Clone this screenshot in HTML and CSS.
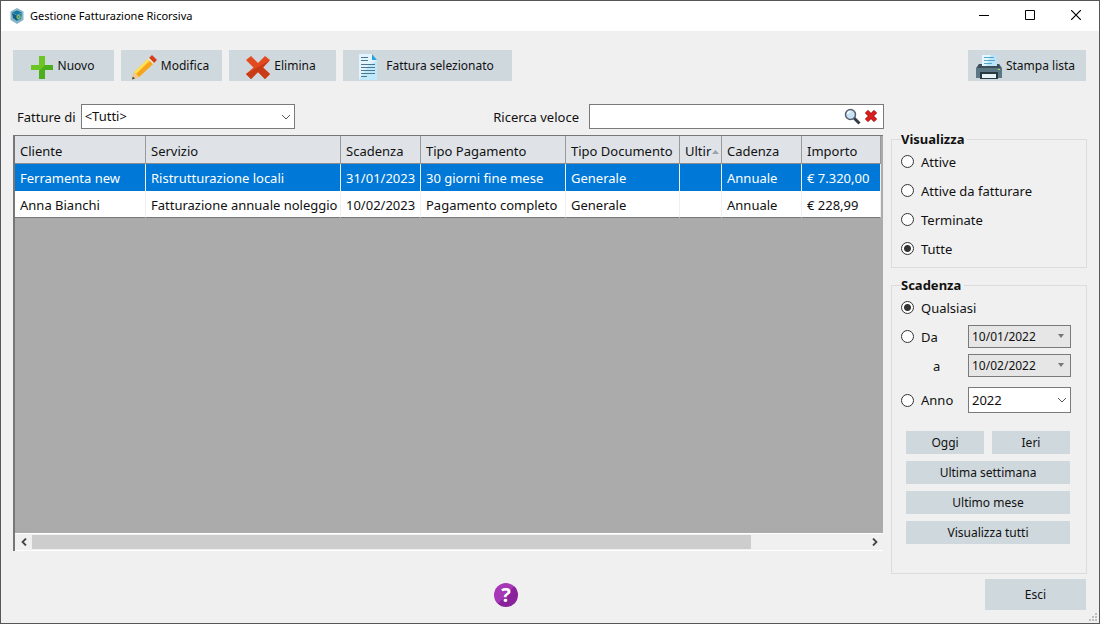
FILE: index.html
```html
<!DOCTYPE html>
<html lang="it">
<head>
<meta charset="utf-8">
<title>Gestione Fatturazione Ricorsiva</title>
<link rel="stylesheet" href="styles.css">
</head>
<body>
<div class="window">
  <header class="titlebar">
    <svg class="app-icon" width="16" height="16" viewBox="0 0 16 16" aria-hidden="true">
      <path d="M8 0 14.500 3.500V12L8 16 1.500 12V3.500Z" fill="#8ab5c9"/>
      <path d="M8 2.500 13 4.500 8 7 3 4.500Z" fill="#16779f"/>
      <path d="M3 5 8 7.500V13L4 10Z" fill="#0e5d83"/>
      <path d="M13 5 8 7.500V13L12 11Z" fill="#238aa6"/>
      <circle cx="9.500" cy="9" r="1.500" fill="none" stroke="#a9bd58" stroke-width="1.200"/>
    </svg>
    <h1 class="title">Gestione Fatturazione Ricorsiva</h1>
    <div class="caption-buttons">
      <button class="caption" aria-label="Riduci a icona"><svg width="10" height="10" viewBox="0 0 10 10"><path d="M0 5.500H10" stroke="#000"/></svg></button>
      <button class="caption" aria-label="Ingrandisci"><svg width="10" height="10" viewBox="0 0 10 10"><path d="M.5.500H9.500V9.500H.5Z" stroke="#000" fill="none"/></svg></button>
      <button class="caption" aria-label="Chiudi"><svg width="10" height="10" viewBox="0 0 10 10"><path d="M0 0 10 10M10 0 0 10" stroke="#000" stroke-width="1.200"/></svg></button>
    </div>
  </header>

  <main class="content">
    <div class="toolbar">
      <button class="btn tool">
        <svg width="24" height="24" viewBox="0 0 24 24" aria-hidden="true"><path d="M9 1H15V10H23V15H15V24H9V15H1V10H9Z" fill="#6cc524"/><path d="M15 10H23V15H15V24H9V16Z" fill="#4cae1d"/></svg>
        Nuovo
      </button>
      <button class="btn tool">
        <svg width="26" height="26" viewBox="0 0 26 26" aria-hidden="true"><path d="M3 18 18 4 23 9 8 23 1 25.500Z" fill="#fcc51e"/><path d="M5 20 20 6 23 9 8 23Z" fill="#f5a41b"/><path d="M3 18 18 4 19.500 5.500 5 20Z" fill="#ffe05b"/><path d="M3 18 8 23 1 25.500Z" fill="#f0c98c"/><path d="M1.800 22.500 4 24.500 1 25.500Z" fill="#444"/><path d="M18 4 21 1 26 6 23 9Z" fill="#d43d1d"/><path d="M17 5 18 4 23 9 22 10Z" fill="#e9eef0"/></svg>
        Modifica
      </button>
      <button class="btn tool">
        <svg width="24" height="24" viewBox="0 0 24 24" aria-hidden="true"><path d="M5 1 12 8 19 1 24 5 17 12.500 24 19 19 24 12 17 5 24 0 19 7.500 12.500 0 5Z" fill="#e34a20"/><path d="M24 5 17 12.500 24 19 19 24 12 17 5 24 0 19Z" fill="#c93a17"/></svg>
        Elimina
      </button>
      <button class="btn tool tool-wide">
        <svg width="20" height="26" viewBox="0 0 20 26" aria-hidden="true"><path d="M1 0H14L19 6V26H1Z" fill="#e2f5ff"/><path d="M10 12 19 6V26H1Z" fill="#bfe8fb"/><path d="M14 0 19 6H14Z" fill="#29a3df"/><path d="M3 3.500H10M3 6.500H10M3 10.500H17M3 13.500H17M3 16.500H17M3 19.500H17M3 22.500H9" stroke="#4b7890"/></svg>
        Fattura selezionato
      </button>
      <button class="btn tool tool-end">
        <svg width="26" height="24" viewBox="0 0 26 24" aria-hidden="true"><path d="M3 9H23L26 13V23H0V13Z" fill="#5b7685"/><path d="M3 9H23L25 13H1Z" fill="#3c4e57"/><path d="M6 0H21V11H6Z" fill="#e4f6ff"/><path d="M15 0H21V11H10Z" fill="#bae5f9"/><path d="M8 2.500H18M8 5.500H19M8 8.500H16" stroke="#57a6ca"/><path d="M4 17H22V24H4Z" fill="#263940"/><path d="M6 19H20V23H6Z" fill="#e8f3f8"/><path d="M22 14.500H24" stroke="#b6df45"/></svg>
        Stampa lista
      </button>
    </div>

    <div class="columns">
      <section class="list">
        <div class="filters">
          <label for="fatture">Fatture di</label>
          <div class="combo combo-tutti">
            <select id="fatture"><option>&lt;Tutti&gt;</option></select>
            <svg width="10" height="6" viewBox="0 0 10 6" aria-hidden="true"><path d="M1 1 5 5 9 1" fill="none" stroke="#555"/></svg>
          </div>
          <label class="search-label" for="ricerca">Ricerca veloce</label>
          <div class="search">
            <input id="ricerca" type="text">
            <button class="icon-btn" aria-label="Cerca"><svg width="17" height="17" viewBox="0 0 17 17"><path d="M10 10 15.500 15.500" stroke="#333b49" stroke-width="3"/><circle cx="6.500" cy="6.500" r="5" fill="#c9e2f7" stroke="#56606e" stroke-width="1.500"/><path d="M3.500 6A3 3 0 0 1 6.500 3.500" stroke="#fff" fill="none" stroke-width="1.500"/></svg></button>
            <button class="icon-btn" aria-label="Cancella"><svg width="14" height="14" viewBox="0 0 14 14"><path d="M2.500 2.500 11.500 11.500M11.500 2.500 2.500 11.500" stroke="#a51212" stroke-width="4.500"/><path d="M2.500 2.500 11.500 11.500M11.500 2.500 2.500 11.500" stroke="#dc2020" stroke-width="2.800"/></svg></button>
          </div>
        </div>

        <div class="grid">
          <table class="table">
            <colgroup><col class="c-cliente"><col class="c-servizio"><col class="c-scad"><col class="c-pag"><col class="c-doc"><col class="c-ult"><col class="c-cad"><col class="c-imp"></colgroup>
            <thead>
              <tr><th>Cliente</th><th>Servizio</th><th>Scadenza</th><th>Tipo Pagamento</th><th>Tipo Documento</th><th class="sorted">Ultir<svg width="7" height="4" viewBox="0 0 7 4" aria-hidden="true"><path d="M0 4 3.500 0 7 4Z" fill="#9aa3ab"/></svg></th><th>Cadenza</th><th>Importo</th></tr>
            </thead>
            <tbody>
              <tr class="selected"><td>Ferramenta new</td><td>Ristrutturazione locali</td><td>31/01/2023</td><td>30 giorni fine mese</td><td>Generale</td><td></td><td>Annuale</td><td>€ 7.320,00</td></tr>
              <tr><td>Anna Bianchi</td><td>Fatturazione annuale noleggio</td><td>10/02/2023</td><td>Pagamento completo</td><td>Generale</td><td></td><td>Annuale</td><td>€ 228,99</td></tr>
            </tbody>
          </table>
          <div class="scrollbar">
            <button class="arrow" aria-label="Scorri a sinistra"><svg width="6" height="8" viewBox="0 0 6 8"><path d="M5 .5 1.500 4 5 7.500" fill="none" stroke="#444" stroke-width="1.800"/></svg></button>
            <div class="track"><div class="thumb"></div></div>
            <button class="arrow" aria-label="Scorri a destra"><svg width="6" height="8" viewBox="0 0 6 8"><path d="M1 .5 4.500 4 1 7.500" fill="none" stroke="#444" stroke-width="1.800"/></svg></button>
          </div>
        </div>
      </section>

      <aside class="side">
        <fieldset class="group">
          <legend>Visualizza</legend>
          <label class="radio"><input type="radio" name="vis">Attive</label>
          <label class="radio"><input type="radio" name="vis">Attive da fatturare</label>
          <label class="radio"><input type="radio" name="vis">Terminate</label>
          <label class="radio"><input type="radio" name="vis" checked>Tutte</label>
        </fieldset>

        <fieldset class="group group-due">
          <legend>Scadenza</legend>
          <label class="radio"><input type="radio" name="scad" checked>Qualsiasi</label>
          <div class="line">
            <label class="radio"><input type="radio" name="scad">Da</label>
            <div class="combo date">
              <input type="text" value="10/01/2022" aria-label="Data iniziale" disabled>
              <svg width="6" height="4" viewBox="0 0 6 4" aria-hidden="true"><path d="M0 0H6L3 4Z" fill="#777"/></svg>
            </div>
          </div>
          <div class="line">
            <label class="to" for="data-fine">a</label>
            <div class="combo date">
              <input id="data-fine" type="text" value="10/02/2022" disabled>
              <svg width="6" height="4" viewBox="0 0 6 4" aria-hidden="true"><path d="M0 0H6L3 4Z" fill="#777"/></svg>
            </div>
          </div>
          <div class="line line-year">
            <label class="radio"><input type="radio" name="scad">Anno</label>
            <div class="combo year">
              <select aria-label="Anno"><option>2022</option></select>
              <svg width="10" height="6" viewBox="0 0 10 6" aria-hidden="true"><path d="M1 1 5 5 9 1" fill="none" stroke="#555"/></svg>
            </div>
          </div>
          <div class="presets">
            <button class="btn">Oggi</button>
            <button class="btn">Ieri</button>
            <button class="btn full">Ultima settimana</button>
            <button class="btn full">Ultimo mese</button>
            <button class="btn full">Visualizza tutti</button>
          </div>
        </fieldset>
      </aside>
    </div>

    <footer class="footer">
      <button class="help" aria-label="Guida">?</button>
      <button class="btn exit">Esci</button>
    </footer>
  </main>
  <svg class="grip" width="9" height="9" viewBox="0 0 9 9" aria-hidden="true"><path d="M6 0H8V2H6ZM3 3H5V5H3ZM6 3H8V5H6ZM0 6H2V8H0ZM3 6H5V8H3ZM6 6H8V8H6Z" fill="#bdbdbd"/></svg>
</div>
</body>
</html>
```

FILE: styles.css
```css
* { box-sizing: border-box; }

body {
  margin: 0;
  font: 13px/18px "Noto Sans", "Open Sans", sans-serif;
  color: #111;
}

button, input, select { font: inherit; color: inherit; }
button { padding: 0; border: 0; background: none; }
svg { display: block; flex: none; }

.window {
  position: relative;
  display: flex;
  flex-direction: column;
  min-height: 100vh;
  border: 1px solid #55565a;
  background: #f0f0f0;
}

.titlebar {
  display: flex;
  align-items: center;
  height: 30px;
  padding-left: 8px;
  background: #fff;
}
.title { margin: 0 0 0 5px; font-size: 11px; font-weight: 400; color: #000; }
.caption-buttons { display: flex; margin-left: auto; padding-bottom: 2px; }
.caption { display: flex; justify-content: center; align-items: center; width: 46px; height: 28px; }

.content {
  display: flex;
  flex: 1;
  flex-direction: column;
  padding: 19px 12px 13px;
}

.btn { background: #cfd8dd; font-size: 12px; text-align: center; }

.toolbar { display: flex; gap: 7px; }
.tool {
  display: flex;
  justify-content: center;
  align-items: center;
  gap: 4px;
  min-width: 101px;
  height: 31px;
  padding: 0 10px 0 7px;
}
.tool svg { margin-top: 3px; }
.tool:nth-child(3) { min-width: 107px; }
.tool-wide { min-width: 169px; gap: 8px; }
.tool-end { min-width: 118px; margin: 0 1px 0 auto; }

.columns { display: flex; flex: 1; gap: 7px; padding-top: 23px; }
.list { display: flex; flex: 1; flex-direction: column; min-width: 0; }

.filters { display: flex; align-items: center; height: 25px; padding-left: 4px; }
.search-label { margin-left: auto; }

.combo { position: relative; border: 1px solid #7a7a7a; background: #fff; }
.combo select, .combo input {
  display: block;
  width: 100%;
  height: 100%;
  padding: 0 20px 1px 3px;
  border: 0;
  background: transparent;
  color: #111;
  appearance: none;
}
.combo svg { position: absolute; top: 50%; right: 3px; margin-top: -3px; pointer-events: none; }
.combo-tutti { width: 214px; height: 25px; margin-left: 5px; }

.search {
  display: flex;
  align-items: center;
  gap: 3px;
  width: 295px;
  height: 25px;
  margin-left: 10px;
  padding: 0 5px 1px 0;
  border: 1px solid #7a7a7a;
  background: #fff;
}
.search input { flex: 1; min-width: 0; height: 100%; border: 0; background: transparent; }

.grid {
  display: flex;
  flex: 1;
  flex-direction: column;
  margin: 6px 1px 23px 0;
  border: solid #777;
  border-width: 1px 0 0 2px;
  background: #ababab;
  overflow: hidden;
}
.table { width: 866px; table-layout: fixed; border-collapse: separate; border-spacing: 0; }
.c-cliente { width: 131px; }
.c-servizio { width: 195px; }
.c-scad { width: 80px; }
.c-pag { width: 145px; }
.c-doc { width: 114px; }
.c-ult { width: 42px; }
.c-cad { width: 80px; }
.c-imp { width: 79px; }
.table th, .table td {
  height: 27px;
  padding: 1px 0 0 5px;
  border-right: 1px solid #f0f0f0;
  background: #fff;
  font-weight: 400;
  text-align: left;
  white-space: nowrap;
}
.table th { height: 28px; padding-top: 2px; border-right-color: #999; border-bottom: 1px solid #8c8c8c; background: #dfe3e8; }
.table .selected td { background: #0078d7; color: #fff; }
.table tbody tr:last-child td { border-bottom: 1px solid #777; }
.sorted svg { display: inline-block; margin-left: 1px; vertical-align: middle; }

.scrollbar { display: flex; height: 18px; margin-top: auto; padding: 1px 0; background: #f0f0f0; border-top: 1px solid #fff; border-bottom: 1px solid #fff; }
.arrow { display: flex; justify-content: center; align-items: center; width: 17px; }
.track { flex: 1; }
.thumb { width: 86.2%; height: 100%; background: #cdcdcd; }

.side { width: 196px; padding-top: 26px; }
.group {
  min-width: 0;
  margin: 0;
  padding: 0 15px 4px 9px;
  border: 1px solid #dcdcdc;
}
.group legend { padding: 0 3px 0 0; margin-bottom: -1px; font-weight: 700; }

.radio { display: flex; align-items: center; gap: 7px; height: 29px; }
.radio input {
  width: 13px;
  height: 13px;
  margin: 0;
  border: 1px solid #333;
  border-radius: 50%;
  background: #fff;
  appearance: none;
}
.radio input:checked { background: radial-gradient(circle, #333 3px, #fff 4px); }

.group-due { margin-top: 8px; padding-bottom: 29px; }
.line { display: flex; justify-content: space-between; align-items: center; height: 29px; }
.line-year { height: 40px; }
.to { margin-left: 32px; }
.date { width: 103px; height: 23px; background: #e6e6e6; font-size: 12px; }
.date svg { right: 6px; }
.year { width: 103px; height: 26px; }

.presets { display: grid; grid-template-columns: 1fr 1fr; gap: 7px 8px; padding: 11px 1px 0 5px; }
.presets .btn { height: 23px; }
.full { grid-column: span 2; }

.footer {
  display: flex;
  align-items: center;
  justify-content: space-between;
  margin-top: 5px;
  padding: 0 1px 0 14px;
}
.help {
  width: 24px;
  height: 24px;
  margin: 0 auto;
  border-radius: 50%;
  background: linear-gradient(135deg, #a637b5 50%, #8a229b 50%);
  color: #fff;
  font-size: 20px;
  font-weight: 700;
  line-height: 24px;
}
.exit { width: 101px; height: 31px; }
.grip { position: absolute; right: 1px; bottom: 1px; }
```
